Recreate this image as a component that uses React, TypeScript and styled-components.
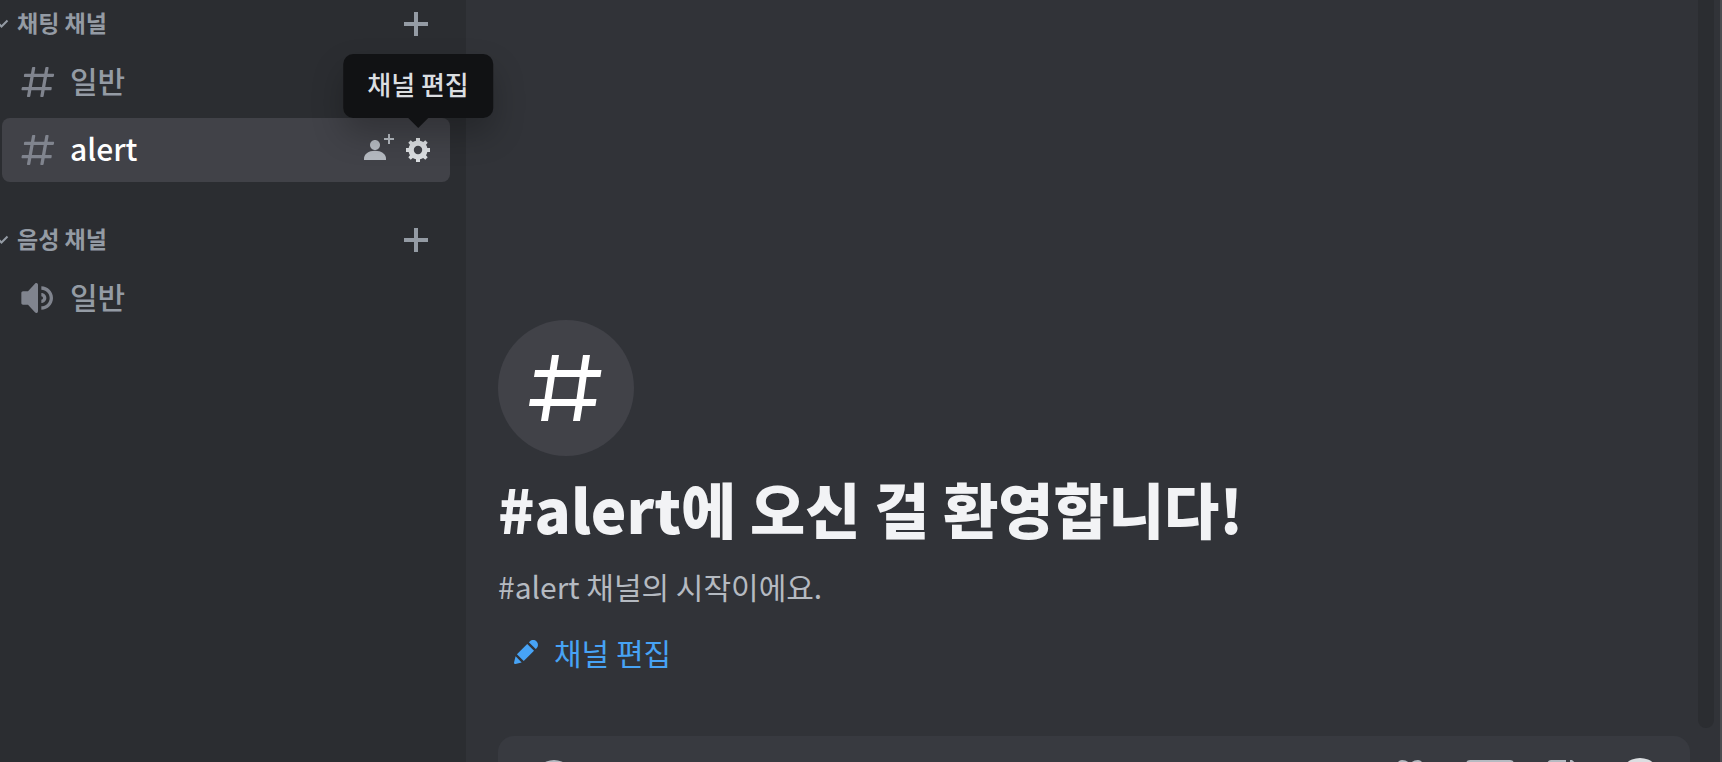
import React from "react";
import styled, { createGlobalStyle } from "styled-components";

const color = {
  sidebar: "#2b2d31",
  main: "#313338",
  selected: "#414248",
  composer: "#383a40",
  muted: "#949ba4",
  channelIcon: "#80848e",
  heading: "#f2f3f5",
  body: "#b5bac1",
  bright: "#dbdee1",
  link: "#47a3f5",
  tooltip: "#111214",
};

const GlobalStyle = createGlobalStyle`
  * { box-sizing: border-box; }
  body {
    margin: 0;
    overflow: hidden;
    background: ${color.main};
    font-family: "Noto Sans CJK KR", "Noto Sans", sans-serif;
  }
  button { font: inherit; border: 0; padding: 0; background: none; color: inherit; cursor: pointer; }
  svg { display: block; flex: none; }
`;

const Viewport = styled.div`
  height: 100vh;
  overflow: hidden;
`;

const Layout = styled.div`
  display: flex;
  height: calc(100vh + 62px);
`;

const Sidebar = styled.nav`
  flex: none;
  width: 466px;
  padding-right: 16px;
  background: ${color.sidebar};
`;

const Section = styled.section`
  display: flex;
  flex-direction: column;
  margin-bottom: 34px;
`;

const SectionHeader = styled.header`
  display: flex;
  align-items: center;
  justify-content: space-between;
  height: 48px;
  margin-bottom: 2px;
  padding-right: 18px;
  color: ${color.muted};
`;

const Label = styled.span`
  padding-bottom: 4px;
`;

const SectionToggle = styled.button`
  display: flex;
  align-items: center;
  gap: 8px;
  font-size: 23px;
  font-weight: 700;
  line-height: 32px;
`;

const IconButton = styled.button<{ $bright?: boolean }>`
  display: flex;
  color: ${(p) => (p.$bright ? color.bright : color.body)};
`;

const AddButton = styled(IconButton)`
  padding: 4px;
  color: ${color.muted};
`;

const ChannelList = styled.ul`
  display: flex;
  flex-direction: column;
  gap: 4px;
  margin: 0;
  padding: 0 0 0 2px;
  list-style: none;
`;

const ChannelRow = styled.li<{ $selected?: boolean }>`
  display: flex;
  align-items: center;
  gap: 8px;
  height: 64px;
  padding: 0 16px;
  border-radius: 8px;
  background: ${(p) => (p.$selected ? color.selected : "transparent")};
  color: ${(p) => (p.$selected ? "#fff" : color.muted)};
`;

const ChannelLink = styled.a`
  flex: 1;
  display: flex;
  align-items: center;
  gap: 12px;
  color: inherit;
  font-size: 30px;
  font-weight: 500;
  line-height: 40px;
  text-decoration: none;

  svg { color: ${color.channelIcon}; }
`;

const TooltipAnchor = styled.div`
  position: relative;
`;

const Tooltip = styled.div`
  position: absolute;
  z-index: 1;
  bottom: calc(100% + 16px);
  left: 50%;
  transform: translateX(-50%);
  padding: 10px 24px 14px;
  border-radius: 10px;
  background: ${color.tooltip};
  box-shadow: 0 16px 32px rgba(0, 0, 0, 0.24);
  color: ${color.bright};
  font-size: 26px;
  font-weight: 500;
  line-height: 40px;
  white-space: nowrap;

  &::after {
    content: "";
    position: absolute;
    top: 100%;
    left: 50%;
    margin-left: -10px;
    border: 10px solid transparent;
    border-top-color: ${color.tooltip};
    border-bottom: 0;
  }
`;

const Main = styled.main`
  flex: 1;
  min-width: 0;
  display: flex;
  flex-direction: column;
  border-right: 2px solid #4b4c51;
  background: ${color.main};
`;

const Messages = styled.div`
  flex: 1;
  min-height: 0;
  display: flex;
  justify-content: space-between;
  padding: 0 6px 8px 32px;
`;

const Welcome = styled.div`
  display: flex;
  flex-direction: column;
  justify-content: flex-end;
  align-items: flex-start;
  padding-bottom: 44px;
`;

const Badge = styled.div`
  display: grid;
  place-items: center;
  width: 136px;
  height: 136px;
  margin-bottom: 16px;
  border-radius: 50%;
  background: #414248;
  color: #fff;
`;

const Title = styled.h1`
  margin: 0 0 22px;
  color: ${color.heading};
  font-size: 60px;
  font-weight: 800;
  line-height: 72px;
`;

const Subtitle = styled.p`
  margin: 0 0 14px;
  color: ${color.body};
  font-size: 30px;
  line-height: 40px;
`;

const EditButton = styled.button`
  display: flex;
  align-items: center;
  gap: 12px;
  height: 64px;
  padding: 0 12px;
  color: ${color.link};
  font-size: 30px;
  font-weight: 400;
  line-height: 40px;
`;

const ScrollTrack = styled.div`
  width: 16px;
  border-radius: 0 0 8px 8px;
  background: ${color.sidebar};
`;

const Composer = styled.form`
  display: flex;
  align-items: center;
  gap: 22px;
  height: 88px;
  margin: 0 30px 0 32px;
  padding: 0 26px 0 32px;
  border-radius: 16px;
  background: ${color.composer};
`;

const ComposerTools = styled.div`
  display: flex;
  gap: 32px;
`;

const ComposerInput = styled.input`
  flex: 1;
  min-width: 0;
  border: 0;
  outline: 0;
  background: none;
  color: ${color.bright};
  font: inherit;
  font-size: 30px;
`;

const HashIcon = () => (
  <svg width="40" height="40" viewBox="0 0 24 24" fill="currentColor" aria-hidden="true">
    <path
      fillRule="evenodd"
      d="M5.88657 21C5.57547 21 5.3399 20.7189 5.39427 20.4126L6.00001 17H2.59511C2.28449 17 2.04905 16.7198 2.10259 16.4138L2.27759 15.4138C2.31946 15.1746 2.52722 15 2.77011 15H6.35001L7.41001 9H4.00511C3.69449 9 3.45905 8.71977 3.51259 8.41381L3.68759 7.41381C3.72946 7.17456 3.93722 7 4.18011 7H7.76001L8.39677 3.41262C8.43914 3.17391 8.64664 3 8.88907 3H9.87344C10.1845 3 10.4201 3.28107 10.3657 3.58738L9.76001 7H15.76L16.3968 3.41262C16.4391 3.17391 16.6466 3 16.8891 3H17.8734C18.1845 3 18.4201 3.28107 18.3657 3.58738L17.76 7H21.1649C21.4755 7 21.711 7.28023 21.6574 7.58619L21.4824 8.58619C21.4406 8.82544 21.2328 9 20.9899 9H17.41L16.35 15H19.7549C20.0655 15 20.301 15.2802 20.2474 15.5862L20.0724 16.5862C20.0306 16.8254 19.8228 17 19.5799 17H16L15.3632 20.5874C15.3209 20.8261 15.1134 21 14.8709 21H13.8866C13.5755 21 13.3399 20.7189 13.3943 20.4126L14 17H8.00001L7.36325 20.5874C7.32088 20.8261 7.11337 21 6.87094 21H5.88657ZM9.41045 9L8.35045 15H14.3504L15.4104 9H9.41045Z"
    />
  </svg>
);

const LargeHashIcon = () => (
  <svg width="74" height="66" viewBox="1 0 74 66" fill="currentColor" aria-hidden="true">
    <path
      fillRule="evenodd"
      d="M24 0H31L28.700 15H52.700L55 0H62L59.700 15H73.500L72.400 22H58.600L55.500 44H68.500L67.400 51H54.400L52 66H45L47.400 51H22.400L20 66H13L15.400 51H1L2.100 44H16.500L19.800 22H6L7.100 15H21.700ZM26.800 22L23.500 44H48.500L51.600 22Z"
    />
  </svg>
);

const SpeakerIcon = () => (
  <svg width="40" height="40" viewBox="0 0 24 24" fill="currentColor" aria-hidden="true">
    <path
      fillRule="evenodd"
      d="M11.383 3.07904C11.009 2.92504 10.579 3.01004 10.293 3.29604L6 8.00204H3C2.45 8.00204 2 8.45304 2 9.00204V15.002C2 15.552 2.45 16.002 3 16.002H6L10.293 20.71C10.579 20.996 11.009 21.082 11.383 20.927C11.757 20.772 12 20.407 12 20.002V4.00204C12 3.59904 11.757 3.23204 11.383 3.07904ZM14 5.00195V7.00195C16.757 7.00195 19 9.24595 19 12.002C19 14.759 16.757 17.002 14 17.002V19.002C17.86 19.002 21 15.863 21 12.002C21 8.14295 17.86 5.00195 14 5.00195ZM14 9.00195C15.654 9.00195 17 10.349 17 12.002C17 13.657 15.654 15.002 14 15.002V13.002C14.551 13.002 15 12.553 15 12.002C15 11.451 14.551 11.002 14 11.002V9.00195Z"
    />
  </svg>
);

const ChevronIcon = () => (
  <svg width="9" height="12" viewBox="0 0 9 12" fill="none" stroke="currentColor" strokeWidth="2" aria-hidden="true">
    <path d="M-4 3L1.500 8.500L7.500 2.500" />
  </svg>
);

const PlusIcon = () => (
  <svg width="24" height="24" viewBox="0 0 24 24" fill="currentColor" aria-hidden="true">
    <path d="M10 0H14V10H24V14H14V24H10V14H0V10H10Z" />
  </svg>
);

const InviteIcon = () => (
  <svg width="32" height="32" viewBox="0 0 16 16" fill="currentColor" aria-hidden="true">
    <path d="M14 2H16V3H14V5H13V3H11V2H13V0H14V2Z" />
    <path d="M6.5 8.00667C7.88 8.00667 9 6.88667 9 5.50667C9 4.12667 7.88 3.00667 6.5 3.00667C5.12 3.00667 4 4.12667 4 5.50667C4 6.88667 5.12 8.00667 6.5 8.00667Z" />
    <path d="M6.5 8.34C3.26 8.34 1 9.98667 1 12.34V13H12V12.34C12 9.98 9.74 8.34 6.5 8.34Z" />
  </svg>
);

const GearIcon = () => (
  <svg width="32" height="32" viewBox="-16 -16 32 32" fill="currentColor" aria-hidden="true">
    <path
      fillRule="evenodd"
      d="M9.300 -2H12V2H9.300A9.500 9.500 0 0 1 8 5.200L9.700 7.300L7.300 9.700L5.200 8A9.500 9.500 0 0 1 2 9.300V12H-2V9.300A9.500 9.500 0 0 1 -5.200 8L-7.300 9.700L-9.700 7.300L-8 5.200A9.500 9.500 0 0 1 -9.300 2H-12V-2H-9.300A9.500 9.500 0 0 1 -8 -5.200L-9.700 -7.300L-7.300 -9.700L-5.200 -8A9.500 9.500 0 0 1 -2 -9.300V-12H2V-9.300A9.500 9.500 0 0 1 5.200 -8L7.300 -9.700L9.700 -7.300L8 -5.200A9.500 9.500 0 0 1 9.300 -2ZM0 4.200A4.200 4.200 0 1 0 0 -4.200A4.200 4.200 0 1 0 0 4.200Z"
    />
  </svg>
);

const PencilIcon = () => (
  <svg width="32" height="32" viewBox="0 0 24 24" fill="currentColor" aria-hidden="true">
    <path
      fillRule="evenodd"
      d="M19.2929 9.8299L19.9409 9.18278C21.353 7.77064 21.353 5.47197 19.9409 4.05892C18.5287 2.64678 16.2292 2.64678 14.817 4.05892L14.1699 4.70694L19.2929 9.8299ZM12.8962 5.97688L5.18469 13.6906L10.3085 18.813L18.0201 11.0992L12.8962 5.97688ZM4.11851 20.9704L8.75906 19.8112L4.18692 15.239L3.02678 19.8796C2.95028 20.1856 3.04028 20.5105 3.26349 20.7337C3.48669 20.9569 3.8116 21.046 4.11851 20.9704Z"
    />
  </svg>
);

const AttachIcon = () => (
  <svg width="48" height="48" viewBox="0 0 48 48" fill="currentColor" aria-hidden="true">
    <path fillRule="evenodd" d="M24 4A20 20 0 1 0 24 44A20 20 0 1 0 24 4ZM22 14H26V22H34V26H26V34H22V26H14V22H22Z" />
  </svg>
);

const GiftIcon = () => (
  <svg width="48" height="48" viewBox="0 0 48 48" fill="none" stroke="currentColor" strokeWidth="4" aria-hidden="true">
    <path d="M24 14C23 8 20 6 16 6C12 6 10 14 16 14H32C38 14 36 6 32 6C28 6 25 8 24 14Z" />
    <path d="M6 16H42V24H6ZM9 24V42H39V24M24 16V42" />
  </svg>
);

const GifIcon = () => (
  <svg width="48" height="48" viewBox="0 0 48 48" fill="none" stroke="currentColor" aria-hidden="true">
    <rect x="2" y="6" width="44" height="36" rx="2" strokeWidth="4" />
    <path d="M19 19H11V29H18V24M25 18V30M32 30V19H39M32 24H38" strokeWidth="3" />
  </svg>
);

const StickerIcon = () => (
  <svg width="48" height="48" viewBox="0 0 48 48" fill="currentColor" aria-hidden="true">
    <path d="M5 4H20V18Q20 24 26 24H44V38Q44 44 38 44H7Q1 44 1 38V10Q1 4 5 4ZM24 4H26L44 20H24Z" />
  </svg>
);

const EmojiIcon = () => (
  <svg width="48" height="48" viewBox="0 0 48 48" fill="currentColor" aria-hidden="true">
    <path
      fillRule="evenodd"
      d="M24 2A21 21 0 1 0 24 44A21 21 0 1 0 24 2ZM16 17A3 3 0 1 1 16 23A3 3 0 1 1 16 17ZM32 17A3 3 0 1 1 32 23A3 3 0 1 1 32 17ZM13 28H35Q32 37 24 37Q16 37 13 28Z"
    />
  </svg>
);

type SectionProps = { title: string; children: React.ReactNode };

const ChannelSection = ({ title, children }: SectionProps) => (
  <Section>
    <SectionHeader>
      <SectionToggle type="button" aria-expanded="true">
        <ChevronIcon />
        <Label>{title}</Label>
      </SectionToggle>
      <AddButton type="button" aria-label="채널 만들기">
        <PlusIcon />
      </AddButton>
    </SectionHeader>
    <ChannelList>{children}</ChannelList>
  </Section>
);

export default function App() {
  return (
    <Viewport>
      <GlobalStyle />
      <Layout>
        <Sidebar>
          <ChannelSection title="채팅 채널">
            <ChannelRow>
              <ChannelLink href="#general">
                <HashIcon />
                <Label>일반</Label>
              </ChannelLink>
            </ChannelRow>
            <ChannelRow $selected>
              <ChannelLink href="#alert">
                <HashIcon />
                <Label>alert</Label>
              </ChannelLink>
              <IconButton type="button" aria-label="초대 코드 만들기">
                <InviteIcon />
              </IconButton>
              <TooltipAnchor>
                <IconButton type="button" $bright aria-describedby="edit-tip" aria-label="설정">
                  <GearIcon />
                </IconButton>
                <Tooltip role="tooltip" id="edit-tip">채널 편집</Tooltip>
              </TooltipAnchor>
            </ChannelRow>
          </ChannelSection>
          <ChannelSection title="음성 채널">
            <ChannelRow>
              <ChannelLink href="#voice">
                <SpeakerIcon />
                <Label>일반</Label>
              </ChannelLink>
            </ChannelRow>
          </ChannelSection>
        </Sidebar>
        <Main>
          <Messages>
            <Welcome>
              <Badge>
                <LargeHashIcon />
              </Badge>
              <Title>#alert에 오신 걸 환영합니다!</Title>
              <Subtitle>#alert 채널의 시작이에요.</Subtitle>
              <EditButton type="button">
                <PencilIcon />
                채널 편집
              </EditButton>
            </Welcome>
            <ScrollTrack />
          </Messages>
          <Composer>
            <IconButton type="button" aria-label="첨부">
              <AttachIcon />
            </IconButton>
            <ComposerInput type="text" aria-label="메시지" />
            <ComposerTools>
              <IconButton type="button" aria-label="선물">
                <GiftIcon />
              </IconButton>
              <IconButton type="button" aria-label="GIF">
                <GifIcon />
              </IconButton>
              <IconButton type="button" aria-label="스티커">
                <StickerIcon />
              </IconButton>
            </ComposerTools>
            <IconButton type="button" $bright aria-label="이모지">
              <EmojiIcon />
            </IconButton>
          </Composer>
        </Main>
      </Layout>
    </Viewport>
  );
}
